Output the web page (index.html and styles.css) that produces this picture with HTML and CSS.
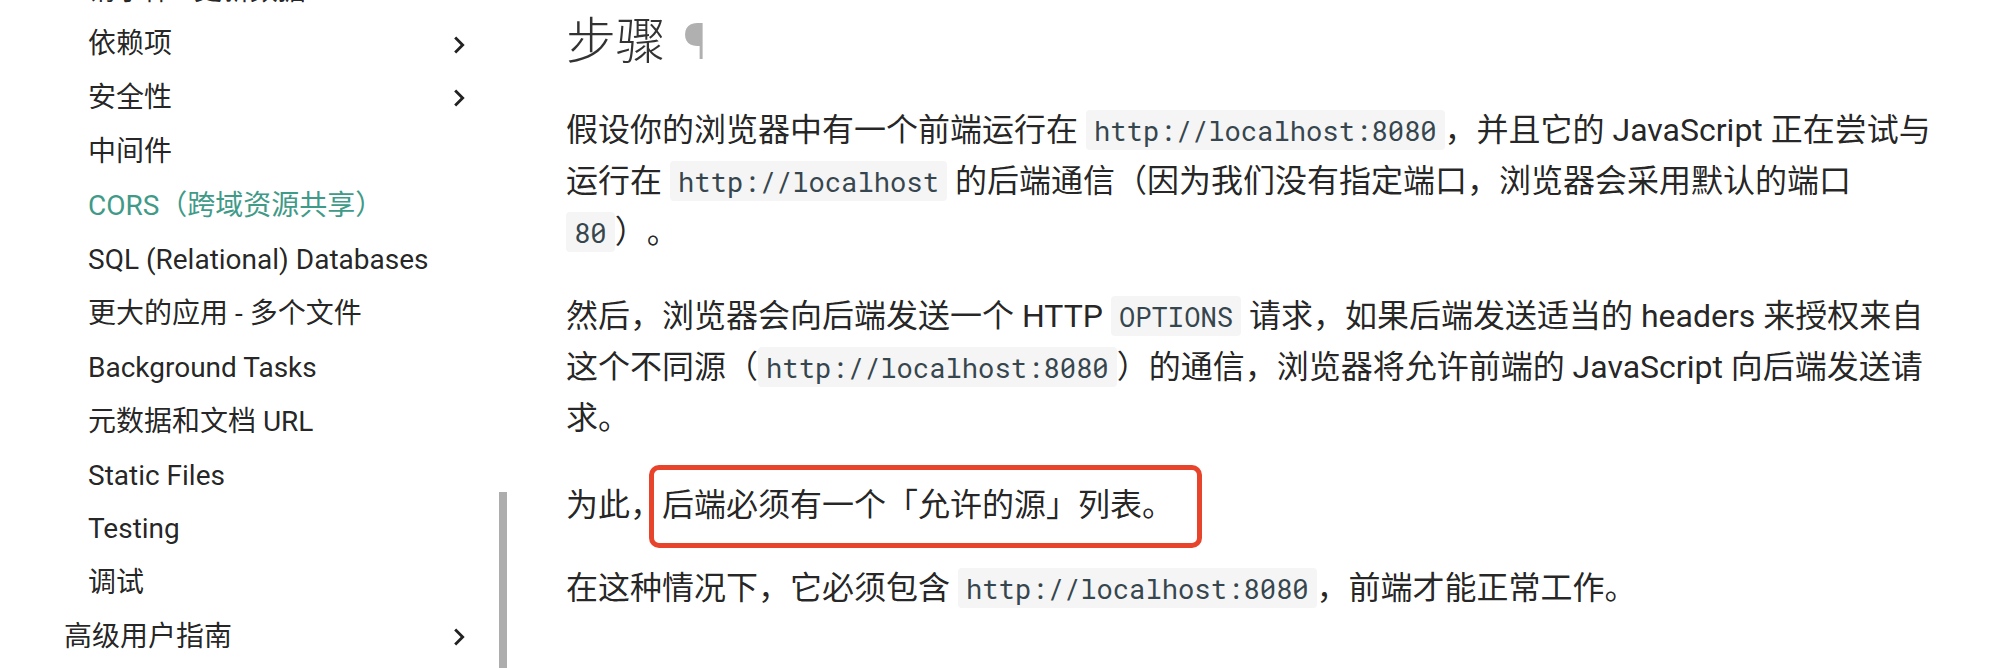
FILE: index.html
```html
<!DOCTYPE html>
<html lang="zh">
<head>
  <meta charset="UTF-8">
  <meta name="viewport" content="width=device-width, initial-scale=1.0">
  <title>CORS（跨域资源共享）</title>
  <link rel="stylesheet" href="styles.css">
</head>
<body>
  <div class="page">
    <nav class="sidebar">
      <ul class="nav">
        <li class="nav-item">
          <ul class="nav nav-nested">
            <li class="nav-item"><a class="nav-link" href="#">请求体 - 更新数据</a></li>
            <li class="nav-item"><a class="nav-link" href="#">依赖项 <svg class="chev" viewBox="0 0 24 24"><path d="M8.59 16.58 13.17 12 8.59 7.41 10 6l6 6-6 6z"/></svg></a></li>
            <li class="nav-item"><a class="nav-link" href="#">安全性 <svg class="chev" viewBox="0 0 24 24"><path d="M8.59 16.58 13.17 12 8.59 7.41 10 6l6 6-6 6z"/></svg></a></li>
            <li class="nav-item"><a class="nav-link" href="#">中间件</a></li>
            <li class="nav-item"><a class="nav-link active" href="#">CORS（跨域资源共享）</a></li>
            <li class="nav-item"><a class="nav-link" href="#">SQL (Relational) Databases</a></li>
            <li class="nav-item"><a class="nav-link" href="#">更大的应用 - 多个文件</a></li>
            <li class="nav-item"><a class="nav-link" href="#">Background Tasks</a></li>
            <li class="nav-item"><a class="nav-link" href="#">元数据和文档 URL</a></li>
            <li class="nav-item"><a class="nav-link" href="#">Static Files</a></li>
            <li class="nav-item"><a class="nav-link" href="#">Testing</a></li>
            <li class="nav-item"><a class="nav-link" href="#">调试</a></li>
          </ul>
        </li>
        <li class="nav-item"><a class="nav-link" href="#">高级用户指南 <svg class="chev" viewBox="0 0 24 24"><path d="M8.59 16.58 13.17 12 8.59 7.41 10 6l6 6-6 6z"/></svg></a></li>
      </ul>
      <div class="scrollbar"><div class="thumb"></div></div>
    </nav>

    <main class="content">
      <h2>步骤<a class="headerlink" href="#">¶</a></h2>
      <p>假设你的浏览器中有一个前端运行在 <code>http://localhost:8080</code>，并且它的 JavaScript 正在尝试与运行在 <code>http://localhost</code> 的后端通信（因为我们没有指定端口，浏览器会采用默认的端口 <code>80</code>）。</p>
      <p>然后，浏览器会向后端发送一个 HTTP <code>OPTIONS</code> 请求，如果后端发送适当的 headers 来授权来自这个不同源（<code>http://localhost:8080</code>）的通信，浏览器将允许前端的 JavaScript 向后端发送请求。</p>
      <p class="note">为此，<span class="mark">后端必须有一个「允许的源」列表。</span></p>
      <p>在这种情况下，它必须包含 <code>http://localhost:8080</code>，前端才能正常工作。</p>
    </main>
  </div>
</body>
</html>
```

FILE: styles.css
```css
body {
  margin: 0;
  height: 668px;
  overflow: hidden;
  background: #fff;
  color: rgba(0, 0, 0, 0.87);
  font-family: Roboto, "Noto Sans CJK SC", sans-serif;
}
.page {
  display: flex;
}
.sidebar {
  display: flex;
  flex: none;
  width: 507px;
  height: 668px;
}
.nav {
  list-style: none;
  margin: -45px 0 0;
  padding: 0 0 0 64px;
  width: 475px;
  box-sizing: border-box;
  font-size: 28px;
  line-height: 1.3;
}
.nav-nested {
  margin: 0;
  padding-left: 24px;
  width: auto;
}
.nav-item {
  margin: 0;
}
.nav-link {
  display: flex;
  justify-content: space-between;
  align-items: center;
  margin-top: 17.5px;
  height: 36.4px;
  color: inherit;
  text-decoration: none;
}
.nav-link.active {
  color: #3f9a88;
}
.chev {
  width: 34px;
  height: 34px;
  margin-right: -1px;
  fill: #222;
}
.scrollbar {
  width: 8px;
  margin-left: 24px;
}
.thumb {
  margin-top: 492px;
  height: 200px;
  background: #adadad;
}
.content {
  margin-left: 59px;
  width: 1376px;
}
.content h2 {
  margin: 7px 0 28px;
  font-size: 50px;
  font-weight: 300;
  line-height: 1.4;
  letter-spacing: -0.01em;
  color: #333;
}
.headerlink {
  margin-left: 18px;
  color: #b0b0b0;
  text-decoration: none;
}
.content p {
  margin: 0 0 32px;
  font-size: 32px;
  line-height: 1.6;
  text-spacing-trim: space-all;
}
.content p.note {
  margin-top: 36px;
}
code {
  padding: 2px 8px;
  border-radius: 4px;
  background: #f5f5f5;
  color: #36464e;
  font-family: "Roboto Mono", "DejaVu Sans Mono", monospace;
  font-size: 0.85em;
}
.mark {
  position: relative;
}
.mark::after {
  content: "";
  position: absolute;
  top: -21px;
  bottom: -24px;
  left: -13px;
  right: -28px;
  border: 5px solid #e8442c;
  border-radius: 10px;
}
```
